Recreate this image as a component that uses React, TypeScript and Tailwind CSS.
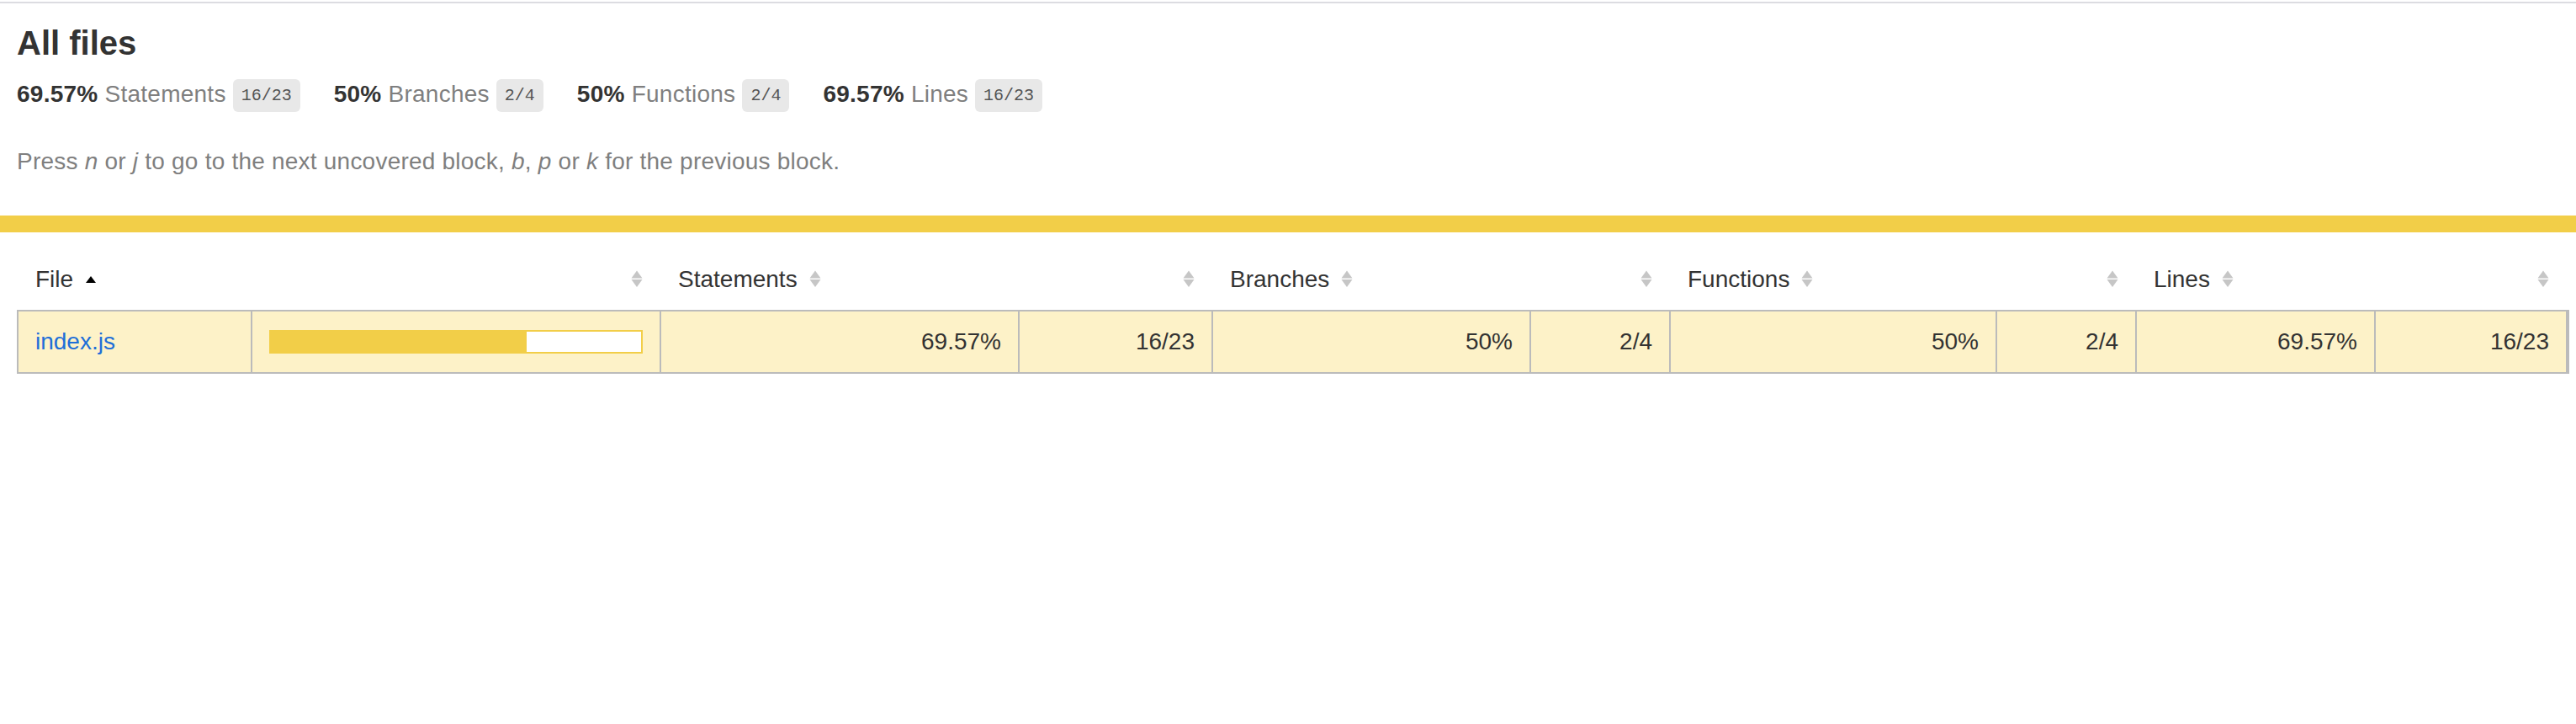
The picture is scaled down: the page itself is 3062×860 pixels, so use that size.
import React from "react";

interface StatProps {
  pct: string;
  label: string;
  frac: string;
}

function Stat({ pct, label, frac }: StatProps) {
  return (
    <div className="py-[20px] pr-[40px] leading-[32px] tracking-[0.25px]">
      <span className="font-bold">{pct + " "}</span>
      <span className="text-[#7f7f7f]">{label}</span>{" "}
      <span className="rounded-[6px] bg-[#e8e8e8] px-[10px] py-[8px] align-middle font-['Liberation_Mono',monospace] text-[20px] leading-[normal] tracking-normal text-[#555]">
        {frac}
      </span>
    </div>
  );
}

function Sorter({ sorted = false, spaced = true }: { sorted?: boolean; spaced?: boolean }) {
  return (
    <svg
      viewBox="0 0 14 20"
      className={
        spaced
          ? "ml-[14px] inline-block h-[20px] w-[14px] align-baseline"
          : "inline-block h-[20px] w-[14px] align-baseline"
      }
    >
      {sorted ? (
        <polygon points="7,7 13,15 1,15" fill="#000" />
      ) : (
        <g fill="#c6c6c6">
          <polygon points="7,0.5 13.5,9.5 0.5,9.5" />
          <polygon points="0.5,11 13.5,11 7,20" />
        </g>
      )}
    </svg>
  );
}

const cols =
  "grid grid-cols-[278px_486px_426px_230px_378px_166px_388px_166px_284px_228px]";

export default function App() {
  const headCell = "border-r-2 border-transparent p-[20px] leading-[32px] whitespace-nowrap";
  const bodyCell = "border-r-2 border-[#bbb] p-[20px] leading-[32px] whitespace-nowrap";

  return (
    <div className="min-h-screen bg-white font-['Liberation_Sans',Arial,sans-serif] text-[28px] text-[#333]">
      <div className="pt-[2px]">
        <div className="h-[2px] bg-[#dcdce1]" />
      </div>

      <div className="px-[20px] pt-[16px] pb-[20px]">
        <h1 className="pt-[8px] pb-[2px] text-[40px] font-bold leading-[46px]">All files</h1>
        <div className="flex">
          <Stat pct="69.57%" label="Statements" frac="16/23" />
          <Stat pct="50%" label="Branches" frac="2/4" />
          <Stat pct="50%" label="Functions" frac="2/4" />
          <Stat pct="69.57%" label="Lines" frac="16/23" />
        </div>
        <p className="my-[28px] leading-[32px] tracking-[0.22px] text-[#7f7f7f]">
          Press <em>n</em> or <em>j</em> to go to the next uncovered block, <em>b</em>,{" "}
          <em>p</em> or <em>k</em> for the previous block.
        </p>
      </div>

      <div className="h-[20px] bg-[#f2ce48]" />

      <div className="p-[20px]">
        <div className={`${cols} w-[3034px] border-x-2 border-transparent`}>
          <div className={headCell}>
            File
            <Sorter sorted />
          </div>
          <div className={`${headCell} text-right`}>
            <Sorter spaced={false} />
          </div>
          <div className={headCell}>
            Statements
            <Sorter />
          </div>
          <div className={`${headCell} text-right`}>
            <Sorter spaced={false} />
          </div>
          <div className={headCell}>
            Branches
            <Sorter />
          </div>
          <div className={`${headCell} text-right`}>
            <Sorter spaced={false} />
          </div>
          <div className={headCell}>
            Functions
            <Sorter />
          </div>
          <div className={`${headCell} text-right`}>
            <Sorter spaced={false} />
          </div>
          <div className={headCell}>
            Lines
            <Sorter />
          </div>
          <div className={`${headCell} border-r-0 text-right`}>
            <Sorter spaced={false} />
          </div>
        </div>

        <div className={`${cols} w-[3034px] border-2 border-[#bbb] bg-[#fdf2c8]`}>
          <div className={bodyCell}>
            <a href="#" className="text-[#1f6fd8]">
              index.js
            </a>
          </div>
          <div className={bodyCell}>
            <div className="flex h-[32px] items-center">
              <div className="flex h-[28px] w-full border-2 border-[#f2ce48]">
                <div className="h-full w-[69%] bg-[#f2ce48]" />
                <div className="h-full w-[31%] bg-white" />
              </div>
            </div>
          </div>
          <div className={`${bodyCell} text-right`}>69.57%</div>
          <div className={`${bodyCell} text-right`}>16/23</div>
          <div className={`${bodyCell} text-right`}>50%</div>
          <div className={`${bodyCell} text-right`}>2/4</div>
          <div className={`${bodyCell} text-right`}>50%</div>
          <div className={`${bodyCell} text-right`}>2/4</div>
          <div className={`${bodyCell} text-right`}>69.57%</div>
          <div className={`${bodyCell} border-r-0 text-right`}>16/23</div>
        </div>
      </div>
    </div>
  );
}
